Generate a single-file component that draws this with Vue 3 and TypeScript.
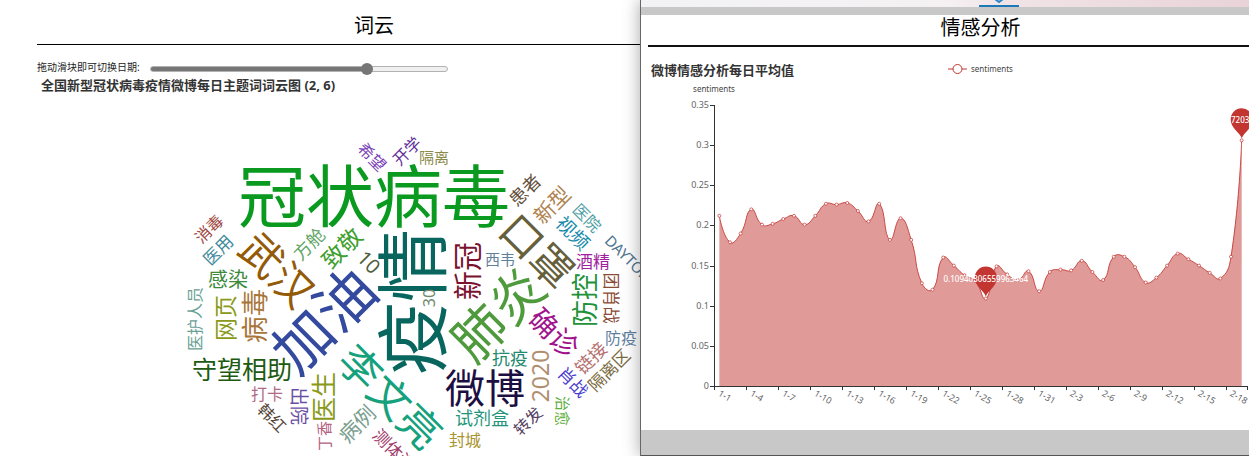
<script setup lang="ts">
import { computed, ref } from 'vue'

interface CloudWord {
  text: string
  x: number
  y: number
  size: number
  rotate: number
  color: string
}

const word = (text: string, x: number, y: number, size: number, rotate: number, color: string): CloudWord => ({
  text, x, y, size, rotate, color,
})

const words: CloudWord[] = [
  word('冠状病毒', 374, 197, 68, 0, '#0a9a20'),
  word('疫情', 413, 302, 73, -90, '#08665f'),
  word('加油', 324, 320, 59, -45, '#334a9e'),
  word('肺炎', 498, 314, 53, -45, '#4f9a3c'),
  word('口罩', 537, 251, 42, 45, '#665f3c'),
  word('武汉', 277, 270, 42, 45, '#935a08'),
  word('李文亮', 390, 397, 42, 45, '#15a17c'),
  word('微博', 485, 388, 40, 0, '#1c0f42'),
  word('守望相助', 242, 370, 25, 0, '#205a10'),
  word('新冠', 468, 271, 29, -90, '#7a1230'),
  word('确诊', 554, 333, 28, 45, '#a0138c'),
  word('防控', 585, 300, 27, -90, '#22933a'),
  word('酒精', 593, 262, 17, 0, '#a01fa0'),
  word('西韦', 500, 259, 15, 0, '#5f8099'),
  word('视频', 573, 233, 19, 45, '#168aab'),
  word('医院', 587, 218, 16, 45, '#4fa0a5'),
  word('新型', 552, 205, 21, -45, '#b08350'),
  word('患者', 525, 190, 18, -45, '#62503c'),
  word('隔离', 434, 157, 15, 0, '#8a8a4a'),
  word('开学', 407, 151, 16, -45, '#5f2f9a'),
  word('希望', 372, 157, 16, 45, '#7a3fb5'),
  word('消毒', 209, 229, 16, -45, '#a04a45'),
  word('医用', 218, 250, 17, -45, '#3f8a9c'),
  word('方舱', 309, 244, 18, -45, '#5fa565'),
  word('致敬', 342, 248, 23, -45, '#3fa030'),
  word('10', 369, 262, 20, 45, '#4f6040'),
  word('感染', 228, 280, 20, 0, '#3d8a3d'),
  word('医护人员', 195, 319, 16, -90, '#6a9f95'),
  word('网页', 225, 318, 23, -90, '#8a9a18'),
  word('病毒', 255, 316, 27, -90, '#a8763a'),
  word('打卡', 267, 394, 16, 0, '#b06a85'),
  word('韩红', 272, 418, 16, 45, '#55453a'),
  word('出院', 299, 406, 19, 90, '#6a4fa5'),
  word('医生', 324, 397, 25, -90, '#8a9a18'),
  word('丁香', 324, 436, 15, -90, '#b5607f'),
  word('病例', 357, 424, 21, -45, '#7aa090'),
  word('测体温', 394, 450, 17, 45, '#a03a6a'),
  word('30', 429, 298, 16, -90, '#6f8a6f'),
  word('抗疫', 510, 358, 18, 0, '#1f8a70'),
  word('2020', 540, 376, 23, -90, '#b08f70'),
  word('试剂盒', 482, 418, 18, 0, '#22957a'),
  word('封城', 465, 440, 16, 0, '#a8942f'),
  word('转发', 528, 421, 16, -45, '#55405f'),
  word('治愈', 563, 411, 15, 90, '#5fb03f'),
  word('肖战', 573, 382, 17, 45, '#4a3fd0'),
  word('链接', 591, 358, 18, -45, '#b5706f'),
  word('隔离区', 609, 370, 17, -45, '#7a6a40'),
  word('防疫', 621, 338, 16, 0, '#5f7f9f'),
  word('团肖战', 611, 298, 17, 90, '#8a4a35'),
  word('DAYTONA', 632, 262, 15, 45, '#4f7490'),
]

const day = ref(37)
const lastDay = 50
const fill = computed(() => `${(day.value / lastDay) * 100}%`)

const sentiments: number[] = [
  0.212, 0.179, 0.19, 0.22, 0.201, 0.202, 0.208, 0.212, 0.201, 0.212,
  0.227, 0.226, 0.228, 0.218, 0.205, 0.227, 0.182, 0.209, 0.182, 0.128,
  0.12, 0.16, 0.15, 0.138, 0.131, 0.109, 0.149, 0.139, 0.132, 0.143,
  0.118, 0.142, 0.145, 0.144, 0.156, 0.142, 0.132, 0.161, 0.161, 0.148,
  0.129, 0.135, 0.15, 0.165, 0.158, 0.15, 0.141, 0.134, 0.161, 0.306,
]

const axisLeft = 714
const axisRight = 1247
const axisBottom = 386
const axisTop = 105
const step = (axisRight - axisLeft) / sentiments.length
const yOf = (v: number) => axisBottom - (v / 0.35) * (axisBottom - axisTop)

const points = sentiments.map((v, i) => ({ x: axisLeft + step * (i + 0.5), y: yOf(v) }))

const linePath = computed(() => {
  const smooth = 0.5
  let d = `M${points[0].x},${points[0].y}`
  let out = { ...points[0] }
  for (let i = 1; i < points.length; i++) {
    const prev = points[i - 1]
    const cur = points[i]
    const next = points[i + 1]
    let into = { ...cur }
    let nextOut = { ...cur }
    if (next) {
      const lenPrev = Math.hypot(cur.x - prev.x, cur.y - prev.y)
      const lenNext = Math.hypot(next.x - cur.x, next.y - cur.y)
      const ratio = lenNext / (lenNext + lenPrev)
      const vx = (next.x - prev.x) * smooth
      const vy = (next.y - prev.y) * smooth
      into = { x: cur.x - vx * (1 - ratio), y: cur.y - vy * (1 - ratio) }
      nextOut = { x: cur.x + vx * ratio, y: cur.y + vy * ratio }
    }
    d += `C${out.x},${out.y} ${into.x},${into.y} ${cur.x},${cur.y}`
    out = nextOut
  }
  return d
})

const areaPath = computed(
  () => `${linePath.value}L${points[points.length - 1].x},${axisBottom}L${points[0].x},${axisBottom}Z`,
)

const yTicks = [0, 0.05, 0.1, 0.15, 0.2, 0.25, 0.3, 0.35]

const xLabels = Array.from({ length: 17 }, (_, k) => {
  const i = k * 3
  return { text: i < 31 ? `1-${i + 1}` : `2-${i - 30}`, tick: axisLeft + step * i, x: axisLeft + step * (i + 0.5) }
})

const pinPath = 'M0,0C-2,-6 -11,-10 -11,-19A11,11 0 0 1 11,-19C11,-10 2,-6 0,0Z'
const low = points[25]
const high = points[49]
</script>

<template>
  <main class="page">
    <section class="cloud-panel">
      <h2 class="heading cloud-heading">词云</h2>
      <div class="slider-row">
        <label for="day">拖动滑块即可切换日期:</label>
        <input id="day" v-model.number="day" type="range" min="0" :max="lastDay" :style="{ '--fill': fill }" />
      </div>
      <h3 class="cloud-title">全国新型冠状病毒疫情微博每日主题词词云图 (2, 6)</h3>
      <svg class="graphic" viewBox="0 96 640 360" role="img" aria-label="词云图">
        <text
          v-for="w in words"
          :key="w.text"
          :transform="`translate(${w.x} ${w.y}) rotate(${w.rotate})`"
          :font-size="w.size"
          :fill="w.color"
          dy="0.37em"
          text-anchor="middle"
        >{{ w.text }}</text>
      </svg>
    </section>

    <section class="mood-panel">
      <div class="window-strip">
        <svg class="tab-mark" viewBox="0 0 40 7" aria-hidden="true">
          <path d="M16 -1L20 2L24 -1" fill="none" stroke="#2a86cf" stroke-width="2" />
          <path d="M0 6H40" stroke="#1c78b8" stroke-width="2" />
        </svg>
      </div>
      <h2 class="heading mood-heading">情感分析</h2>
      <svg class="graphic" viewBox="641 47 608 383" role="img" aria-label="微博情感分析每日平均值">
        <text class="chart-title" x="651" y="75">微博情感分析每日平均值</text>

        <g stroke="#c23531" fill="#fff">
          <path d="M948 69H967" />
          <circle cx="957.5" cy="69" r="4.5" />
        </g>
        <text class="small name" x="971" y="72">sentiments</text>
        <text class="small name" x="714" y="92" text-anchor="middle">sentiments</text>

        <g stroke="#333" shape-rendering="crispEdges">
          <path :d="`M${axisLeft + 0.5} ${axisTop}V${axisBottom + 1}M${axisLeft} ${axisBottom + 0.5}H${axisRight + 1}`" />
          <path v-for="t in yTicks" :key="t" :d="`M${axisLeft - 4} ${Math.round(yOf(t)) + 0.5}H${axisLeft}`" />
          <path v-for="l in xLabels" :key="l.text" :d="`M${Math.round(l.tick) + 0.5} ${axisBottom}v4`" />
          <path :d="`M${axisRight + 0.5} ${axisBottom}v4`" />
        </g>
        <text
          v-for="t in yTicks"
          :key="t"
          class="small"
          :x="axisLeft - 5"
          :y="Math.round(yOf(t)) + 3"
          text-anchor="end"
        >{{ t }}</text>
        <text
          v-for="l in xLabels"
          :key="l.text"
          class="small"
          :transform="`translate(${l.x} ${axisBottom + 6}) rotate(30)`"
          dy="0.4em"
        >{{ l.text }}</text>

        <path :d="areaPath" fill="#c23531" fill-opacity="0.5" />
        <path :d="linePath" fill="none" stroke="#c23531" stroke-opacity="0.85" />
        <g fill="#fff" stroke="#c23531" stroke-opacity="0.7">
          <circle v-for="(p, i) in points" :key="i" :cx="p.x" :cy="p.y" r="1.5" />
        </g>

        <g fill="#c23531">
          <path :d="pinPath" :transform="`translate(${low.x} ${low.y - 2})`" />
          <path :d="pinPath" :transform="`translate(${high.x} ${high.y - 2})`" />
        </g>
        <text class="mark" :x="low.x" :y="low.y - 16" text-anchor="middle">0.10940306559963464</text>
        <text class="mark" x="1231" :y="high.y - 17">7203</text>
      </svg>
      <div class="window-foot"></div>
    </section>
  </main>
</template>

<style>
body {
  margin: 0;
  background: #fff;
}
</style>

<style scoped>
.page {
  display: grid;
  grid-template-columns: minmax(0, 640fr) minmax(0, 609fr);
  min-height: 100vh;
  overflow: hidden;
  color: #000;
  font-family: "Noto Sans", "Noto Sans CJK SC", sans-serif;
}

.cloud-panel {
  min-width: 0;
}

.mood-panel {
  position: relative;
  display: flex;
  flex-direction: column;
  min-width: 0;
  border-left: 1px solid #666;
  background: #fff;
  box-shadow: 0 0 16px rgba(0, 0, 0, 0.35);
}

.heading {
  box-sizing: border-box;
  margin: 0;
  font-size: 20px;
  font-weight: 400;
  text-align: center;
}

.cloud-heading {
  width: calc(100% + 34px);
  height: 45px;
  margin-left: 37px;
  padding-top: 11px;
  border-bottom: 1px solid #000;
  line-height: 30px;
}

.mood-heading {
  width: calc(100% + 57px);
  height: 32px;
  margin-left: 7px;
  border-bottom: 2px solid #111;
  line-height: 26px;
}

.slider-row {
  display: flex;
  align-items: center;
  gap: 10px;
  height: 16px;
  margin: 15px 0 0 37px;
  font-size: 10px;
  line-height: 14px;
}

.slider-row label {
  margin-top: -2px;
  color: #222;
}

.slider-row input {
  width: 298px;
  height: 12px;
  margin: 2px 0 0;
  appearance: none;
  background: transparent;
}

.slider-row input::-webkit-slider-runnable-track {
  box-sizing: border-box;
  height: 6px;
  border: 1px solid #b2b2b2;
  border-radius: 3px;
  background: linear-gradient(to right, #767676 var(--fill), #efefef var(--fill)) border-box;
}

.slider-row input::-webkit-slider-thumb {
  width: 12px;
  height: 12px;
  margin-top: -4px;
  border-radius: 50%;
  appearance: none;
  background: #767676;
}

.cloud-title {
  height: 20px;
  margin: 0 0 0 41px;
  color: #333;
  font-size: 13px;
  font-weight: 700;
  line-height: 18px;
}

.graphic {
  display: block;
  width: 100%;
}

.window-strip {
  display: flex;
  justify-content: center;
  height: 7px;
  border-bottom: 8px solid #c8c8c8;
  background: linear-gradient(to right, #f2f2f5, #f5f1f3 50%, #f0e4e7 60%, #e9d3d8);
}

.tab-mark {
  width: 40px;
  height: 7px;
  margin-left: 108px;
}

.window-foot {
  flex: 1;
  min-height: 25px;
  border-bottom: 1px solid #555;
  background: #c8c8c8;
}

.chart-title {
  fill: #333;
  font-size: 13px;
  font-weight: 700;
}

.small {
  fill: #666;
  font-size: 9px;
}

.name {
  fill: #444;
  font-size: 8px;
}

.mark {
  fill: #fff;
  font-size: 8px;
  font-weight: 500;
}
</style>
